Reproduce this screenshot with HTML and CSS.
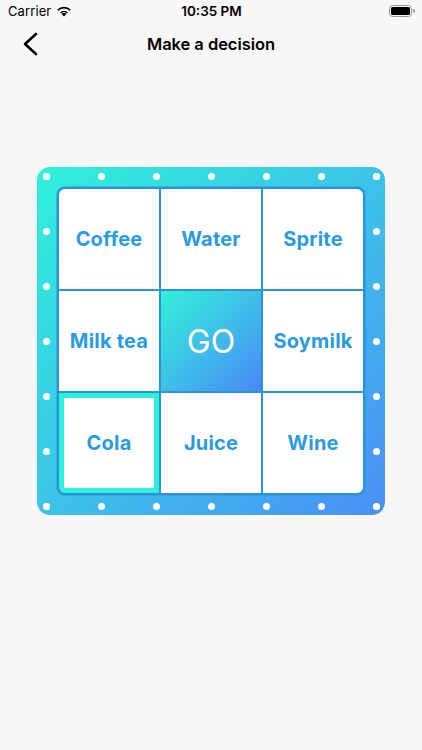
FILE: index.html
```html
<!DOCTYPE html>
<html>
<head>
<meta charset="utf-8">
<link rel="stylesheet" href="styles.css">
</head>
<body>
<div class="status">
  <div class="status-left">
    <span class="carrier">Carrier</span>
    <svg class="wifi" width="16" height="12" viewBox="0 0 16 12">
      <path d="M8 11.5 L5.6 9 A3.4 3.4 0 0 1 10.4 9 Z" fill="#000"/>
      <path d="M3.9 7.3 A5.9 5.9 0 0 1 12.1 7.3 L11 8.4 A4.4 4.4 0 0 0 5 8.4 Z" fill="#000"/>
      <path d="M1.2 4.6 A9.8 9.8 0 0 1 14.8 4.6 L13.6 5.8 A8.1 8.1 0 0 0 2.4 5.8 Z" fill="#000"/>
    </svg>
  </div>
  <div class="time">10:35 PM</div>
  <div class="status-right">
    <svg width="26" height="12" viewBox="0 0 26 12">
      <rect x="0.5" y="0.5" width="22" height="11" rx="3" fill="none" stroke="#999" stroke-width="1"/>
      <rect x="2" y="2" width="19" height="8" rx="1.6" fill="#000"/>
      <path d="M24 4 A2 2 0 0 1 24 8 Z" fill="#999"/>
    </svg>
  </div>
</div>
<div class="nav">
  <svg class="back" width="16" height="24" viewBox="0 0 16 24">
    <path d="M14 2 L3 12 L14 22" fill="none" stroke="#000" stroke-width="2.6" stroke-linecap="round" stroke-linejoin="round"/>
  </svg>
  <div class="title">Make a decision</div>
</div>
<main class="content">
  <div class="board">
    <div class="dots dots-top"><i></i><i></i><i></i><i></i><i></i><i></i><i></i></div>
    <div class="dots dots-bottom"><i></i><i></i><i></i><i></i><i></i><i></i><i></i></div>
    <div class="dots dots-left"><i></i><i></i><i></i><i></i><i></i><i></i><i></i></div>
    <div class="dots dots-right"><i></i><i></i><i></i><i></i><i></i><i></i><i></i></div>
    <div class="grid">
      <div class="cell">Coffee</div>
      <div class="cell">Water</div>
      <div class="cell">Sprite</div>
      <div class="cell">Milk tea</div>
      <div class="cell go">GO</div>
      <div class="cell">Soymilk</div>
      <div class="cell active">Cola</div>
      <div class="cell">Juice</div>
      <div class="cell">Wine</div>
    </div>
  </div>
</main>
</body>
</html>
```

FILE: styles.css
```css
* { box-sizing: border-box; }
html, body {
  margin: 0;
  padding: 0;
  background: #f7f7f7;
  font-family: Inter, "Liberation Sans", sans-serif;
  color: #000;
  width: 422px;
  height: 750px;
  overflow: hidden;
}
.status {
  height: 22px;
  display: flex;
  align-items: center;
  justify-content: space-between;
  padding: 0 7px 0 8px;
  position: relative;
}
.status-left {
  display: flex;
  align-items: center;
  gap: 5px;
  font-size: 13px;
  width: 100px;
}
.carrier { letter-spacing: 0.1px; }
.time {
  font-size: 13.5px;
  font-weight: 600;
  text-align: center;
}
.status-right {
  width: 100px;
  display: flex;
  justify-content: flex-end;
}
.nav {
  height: 44px;
  display: flex;
  align-items: center;
  justify-content: center;
  position: relative;
}
.back {
  position: absolute;
  left: 22px;
  top: 10px;
}
.title {
  font-size: 16.5px;
  font-weight: 600;
  letter-spacing: -0.05px;
}
.content {
  display: flex;
  justify-content: center;
  padding-top: 101px;
}
.board {
  position: relative;
  width: 348px;
  height: 348px;
  border-radius: 13px;
  background: linear-gradient(135deg, #2ff0da 0%, #3cc4e8 50%, #4a8ef6 100%);
  padding: 20px;
}
.dots {
  position: absolute;
  display: flex;
  justify-content: space-between;
}
.dots i {
  display: block;
  width: 7px;
  height: 7px;
  border-radius: 50%;
  background: #fff;
}
.dots-top, .dots-bottom {
  left: 5.5px;
  right: 5.5px;
}
.dots-top { top: 5.5px; }
.dots-bottom { bottom: 5.5px; }
.dots-left, .dots-right {
  flex-direction: column;
  top: 5.5px;
  bottom: 5.5px;
}
.dots-left { left: 5.5px; }
.dots-right { right: 5.5px; }
.grid {
  width: 308px;
  height: 308px;
  background: #2b93dc;
  border-radius: 8px;
  padding: 2px;
  display: grid;
  grid-template-columns: repeat(3, 1fr);
  grid-template-rows: repeat(3, 1fr);
  gap: 2px;
  overflow: hidden;
  box-shadow: 0 0 0 1px rgba(43,147,220,0.5);
}
.cell {
  background: #fff;
  display: flex;
  align-items: center;
  justify-content: center;
  font-size: 20px;
  font-weight: 700;
  color: #2b9be0;
  letter-spacing: 0.2px;
}
.grid .cell:nth-child(1) { border-top-left-radius: 6px; }
.grid .cell:nth-child(3) { border-top-right-radius: 6px; }
.grid .cell:nth-child(7) { border-bottom-left-radius: 6px; }
.grid .cell:nth-child(9) { border-bottom-right-radius: 6px; }
.cell.go {
  background: linear-gradient(135deg, #33f0d8 0%, #3fbfea 50%, #4a88f6 100%);
  color: #fff;
  font-weight: 400;
  font-size: 32px;
  letter-spacing: 0;
}
.cell.active {
  border: 5px solid #2ef0dc;
}
```
